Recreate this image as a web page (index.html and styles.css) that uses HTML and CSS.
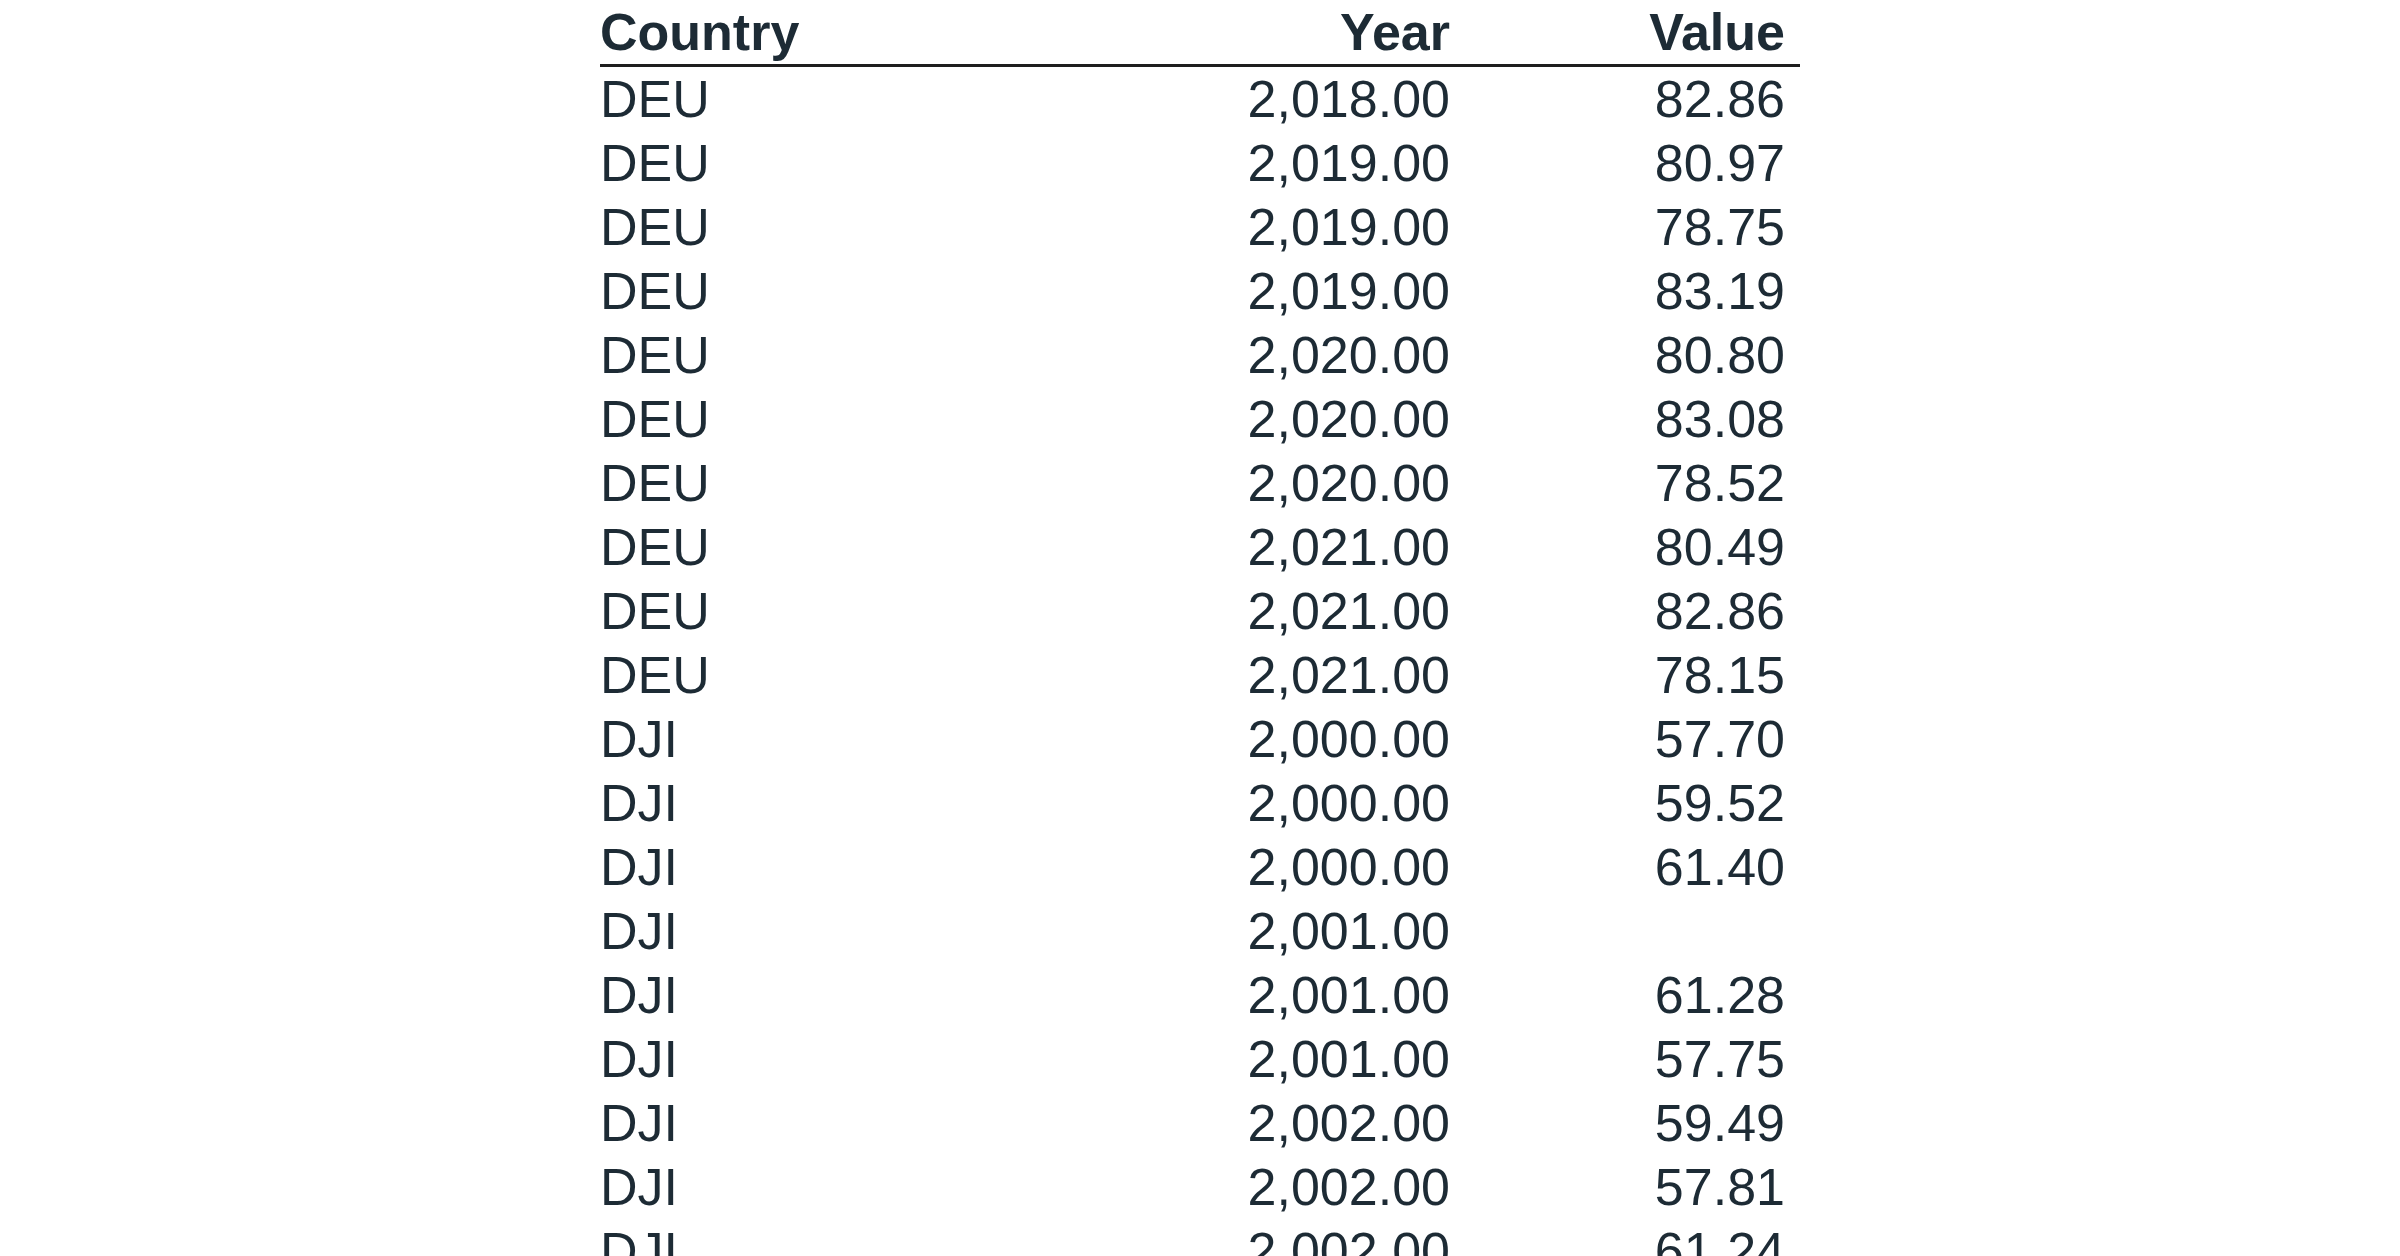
FILE: index.html
```html
<!DOCTYPE html>
<html lang="en">
<head>
<meta charset="utf-8">
<title>Table</title>
<link rel="stylesheet" href="styles.css">
</head>
<body>
<table class="data">
<colgroup><col class="c-country"><col class="c-year"><col class="c-value"></colgroup>
<thead>
<tr><th class="txt">Country</th><th class="num">Year</th><th class="num">Value</th></tr>
</thead>
<tbody>
<tr><td class="txt">DEU</td><td class="num">2,018.00</td><td class="num">82.86</td></tr>
<tr><td class="txt">DEU</td><td class="num">2,019.00</td><td class="num">80.97</td></tr>
<tr><td class="txt">DEU</td><td class="num">2,019.00</td><td class="num">78.75</td></tr>
<tr><td class="txt">DEU</td><td class="num">2,019.00</td><td class="num">83.19</td></tr>
<tr><td class="txt">DEU</td><td class="num">2,020.00</td><td class="num">80.80</td></tr>
<tr><td class="txt">DEU</td><td class="num">2,020.00</td><td class="num">83.08</td></tr>
<tr><td class="txt">DEU</td><td class="num">2,020.00</td><td class="num">78.52</td></tr>
<tr><td class="txt">DEU</td><td class="num">2,021.00</td><td class="num">80.49</td></tr>
<tr><td class="txt">DEU</td><td class="num">2,021.00</td><td class="num">82.86</td></tr>
<tr><td class="txt">DEU</td><td class="num">2,021.00</td><td class="num">78.15</td></tr>
<tr><td class="txt">DJI</td><td class="num">2,000.00</td><td class="num">57.70</td></tr>
<tr><td class="txt">DJI</td><td class="num">2,000.00</td><td class="num">59.52</td></tr>
<tr><td class="txt">DJI</td><td class="num">2,000.00</td><td class="num">61.40</td></tr>
<tr><td class="txt">DJI</td><td class="num">2,001.00</td><td class="num"></td></tr>
<tr><td class="txt">DJI</td><td class="num">2,001.00</td><td class="num">61.28</td></tr>
<tr><td class="txt">DJI</td><td class="num">2,001.00</td><td class="num">57.75</td></tr>
<tr><td class="txt">DJI</td><td class="num">2,002.00</td><td class="num">59.49</td></tr>
<tr><td class="txt">DJI</td><td class="num">2,002.00</td><td class="num">57.81</td></tr>
<tr><td class="txt">DJI</td><td class="num">2,002.00</td><td class="num">61.24</td></tr>
</tbody>
</table>
</body>
</html>
```
FILE: styles.css
```css
html, body {
  margin: 0;
  padding: 0;
  background: #ffffff;
}
body {
  font-family: "Liberation Sans", Arial, sans-serif;
  color: #1d2b35;
  overflow: hidden;
}
.data {
  width: 1200px;
  margin: 0 auto;
  border-collapse: separate;
  border-spacing: 0;
  table-layout: fixed;
  font-size: 52px;
}
.c-country { width: 560px; }
.c-year { width: 305px; }
.c-value { width: 335px; }
.data th,
.data td {
  padding: 0;
  line-height: 64px;
  height: 64px;
  white-space: nowrap;
}
.data th {
  font-weight: bold;
  border-bottom: 3px solid #1e1e1e;
}
.txt { text-align: left; }
.num { text-align: right; padding-right: 15px !important; }
```
